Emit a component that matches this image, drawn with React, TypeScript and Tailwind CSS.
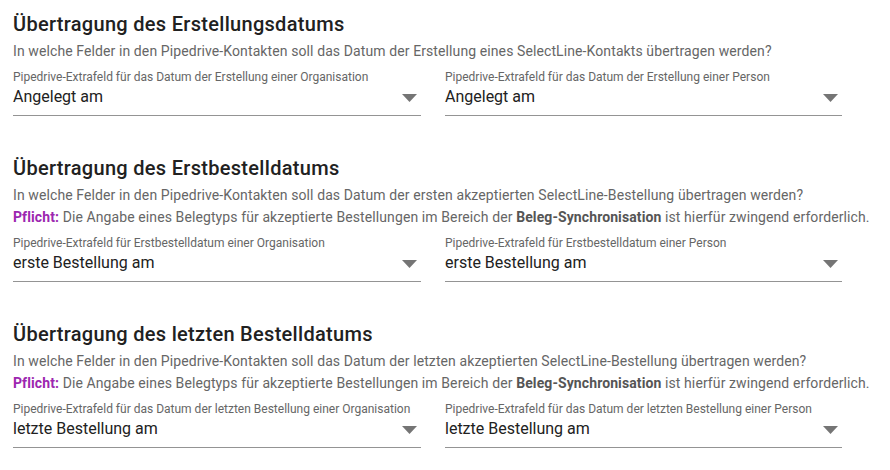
import React from "react";

type Field = { label: string; value: string };

type Section = {
  title: string;
  description: string;
  required?: boolean;
  fields: [Field, Field];
};

const sections: Section[] = [
  {
    title: "Übertragung des Erstellungsdatums",
    description:
      "In welche Felder in den Pipedrive-Kontakten soll das Datum der Erstellung eines SelectLine-Kontakts übertragen werden?",
    fields: [
      { label: "Pipedrive-Extrafeld für das Datum der Erstellung einer Organisation", value: "Angelegt am" },
      { label: "Pipedrive-Extrafeld für das Datum der Erstellung einer Person", value: "Angelegt am" },
    ],
  },
  {
    title: "Übertragung des Erstbestelldatums",
    description:
      "In welche Felder in den Pipedrive-Kontakten soll das Datum der ersten akzeptierten SelectLine-Bestellung übertragen werden?",
    required: true,
    fields: [
      { label: "Pipedrive-Extrafeld für Erstbestelldatum einer Organisation", value: "erste Bestellung am" },
      { label: "Pipedrive-Extrafeld für Erstbestelldatum einer Person", value: "erste Bestellung am" },
    ],
  },
  {
    title: "Übertragung des letzten Bestelldatums",
    description:
      "In welche Felder in den Pipedrive-Kontakten soll das Datum der letzten akzeptierten SelectLine-Bestellung übertragen werden?",
    required: true,
    fields: [
      { label: "Pipedrive-Extrafeld für das Datum der letzten Bestellung einer Organisation", value: "letzte Bestellung am" },
      { label: "Pipedrive-Extrafeld für das Datum der letzten Bestellung einer Person", value: "letzte Bestellung am" },
    ],
  },
];

const SelectField = ({ field, width }: { field: Field; width: string }) => (
  <div className={`${width} flex flex-col`}>
    <span className="text-[12px] leading-[16px] text-[#666666] whitespace-nowrap">{field.label}</span>
    <div className="flex items-center justify-between border-b border-[#949494] pb-[6px]">
      <span className="text-[16px] leading-[24px] text-[#212121]">{field.value}</span>
      <svg width="15" height="8" viewBox="0 0 15 8" className="mr-[4px] mt-[2px]">
        <path d="M0 0h15L7.5 8z" fill="#757575" />
      </svg>
    </div>
  </div>
);

export default function App() {
  return (
    <div className="bg-white w-[890px] h-[470px] pl-[13px] pt-[12px] font-['Roboto',sans-serif] flex flex-col gap-[40px]">
      {sections.map((s) => (
        <div key={s.title} className="flex flex-col">
          <h2 className="text-[20px] leading-[24px] font-medium tracking-[0.3px] text-[#212121]">{s.title}</h2>
          <div className="mt-[4px] text-[14px] leading-[22px] tracking-[0.1px] text-[#666666]">
            <p className="whitespace-nowrap">{s.description}</p>
            {s.required && (
              <p className="whitespace-nowrap">
                <span className="font-bold text-[#9c27b0]">Pflicht:</span> Die Angabe eines Belegtyps für akzeptierte
                Bestellungen im Bereich der <span className="font-bold text-[#555555]">Beleg-Synchronisation</span> ist
                hierfür zwingend erforderlich.
              </p>
            )}
          </div>
          <div className="mt-[7px] flex gap-[24px]">
            <SelectField field={s.fields[0]} width="w-[408px]" />
            <SelectField field={s.fields[1]} width="w-[397px]" />
          </div>
        </div>
      ))}
    </div>
  );
}
